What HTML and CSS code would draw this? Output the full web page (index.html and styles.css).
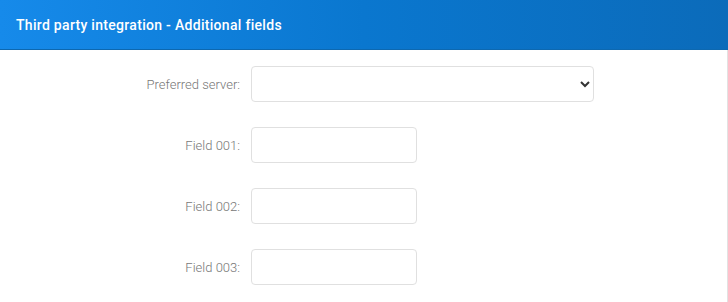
FILE: index.html
```html
<!DOCTYPE html>
<html lang="en">
<head>
    <meta charset="UTF-8">
    <meta name="viewport" content="width=device-width, initial-scale=1.0">
    <title>Third party integration - Additional fields</title>
    <link rel="stylesheet" href="styles.css">
</head>
<body>
    <div class="panel">
        <div class="panel-header">
            <h2 class="panel-title">Third party integration - Additional fields</h2>
        </div>

        <form class="panel-body">
            <div class="form-row">
                <label class="form-label" for="server">Preferred server:</label>
                <select id="server" class="form-select">
                    <option></option>
                </select>
            </div>

            <div class="form-row">
                <label class="form-label" for="field001">Field 001:</label>
                <input id="field001" class="form-input" type="text">
            </div>

            <div class="form-row">
                <label class="form-label" for="field002">Field 002:</label>
                <input id="field002" class="form-input" type="text">
            </div>

            <div class="form-row">
                <label class="form-label" for="field003">Field 003:</label>
                <input id="field003" class="form-input" type="text">
            </div>
        </form>
    </div>
</body>
</html>
```

FILE: styles.css
```css
* {
    margin: 0;
    padding: 0;
    box-sizing: border-box;
}

body {
    font-family: Roboto, 'Liberation Sans', sans-serif;
    background: #ffffff;
    color: #333333;
}

.panel {
    width: 728px;
    height: 302px;
    background: #ffffff;
    border-right: 1px solid #e2e2e2;
}

.panel-header {
    height: 50px;
    width: 728px;
    display: flex;
    align-items: center;
    padding: 1px 16px 0;
    background: linear-gradient(90deg, #168aea 0%, #0a77cf 50%, #0b6bba 100%);
    border-bottom: 1px solid #0d68b0;
}

.panel-title {
    font-size: 14px;
    font-weight: 500;
    letter-spacing: 0.3px;
    color: #ffffff;
}

.panel-body {
    display: flex;
    flex-direction: column;
    gap: 25px;
    padding-top: 16px;
}

.form-row {
    display: grid;
    grid-template-columns: 240px auto;
    column-gap: 11px;
    align-items: center;
}

.form-label {
    text-align: right;
    font-size: 13px;
    font-weight: 300;
    color: #777777;
}

.form-select,
.form-input {
    height: 36px;
    border: 1px solid #e0e0e0;
    border-radius: 4px;
    background: #ffffff;
    font-family: inherit;
    font-size: 13px;
    color: #333333;
    outline: none;
}

.form-select {
    width: 343px;
    padding: 0 6px;
}

.form-input {
    width: 166px;
    padding: 0 10px;
}
```
